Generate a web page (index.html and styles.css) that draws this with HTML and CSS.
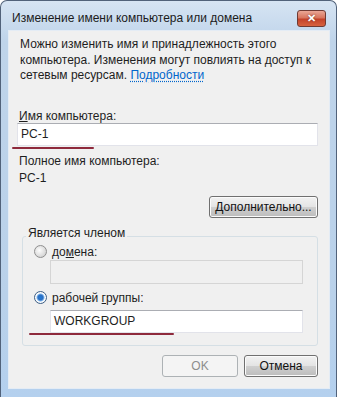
FILE: index.html
```html
<!DOCTYPE html>
<html lang="ru">

<head>
  <meta charset="UTF-8">
  <title>Изменение имени компьютера или домена</title>
  <link rel="stylesheet" href="styles.css">
</head>

<body>
  <div class="window">
    <div class="titlebar">
      <div class="title">Изменение имени компьютера или домена</div>
      <div class="close_btn">&#x2715;</div>
    </div>

    <div class="client">
      <p class="intro">Можно изменить имя и принадлежность этого компьютера. Изменения могут повлиять на доступ к сетевым ресурсам. <a class="more">Подробности</a></p>

      <div class="label name_label"><u>И</u>мя компьютера:</div>
      <div class="textbox">PC-1</div>

      <div class="label full_label">Полное имя компьютера:</div>
      <div class="label">PC-1</div>

      <div class="row_right">
        <div class="btn btn_more"><u>Д</u>ополнительно...</div>
      </div>

      <fieldset class="group">
        <legend>Является членом</legend>
        <div class="radio_row">
          <span class="radio"></span>
          <span>до<u>м</u>ена:</span>
        </div>
        <div class="textbox small disabled"></div>
        <div class="radio_row second">
          <span class="radio checked"></span>
          <span>рабочей <u>г</u>руппы:</span>
        </div>
        <div class="textbox small">WORKGROUP</div>
      </fieldset>

      <div class="buttons">
        <div class="btn btn_ok">OK</div>
        <div class="btn btn_cancel">Отмена</div>
      </div>

      <!-- red marks drawn over the screenshot -->
      <div class="mark mark_name"></div>
      <div class="mark mark_group"></div>
    </div>
  </div>
</body>

</html>
```

FILE: styles.css
```css
body {
  margin: 0;
  font-family: "Liberation Sans", Arial, sans-serif;
  font-size: 12px;
  color: #1e1e1e;
}

.window {
  width: 337px;
  height: 397px;
  box-sizing: border-box;
  border: 1px solid #51627a;
  border-bottom: none;
  border-radius: 7px 7px 0 0;
  background: linear-gradient(#d6e4f3, #bfd4ea 40px, #b9d1ea 300px, #b4d0ee);
  padding: 0 6px 0 7px;
}

.titlebar {
  height: 29px;
  display: flex;
  align-items: flex-start;
  justify-content: space-between;
}

.title {
  padding-top: 10px;
  padding-left: 4px;
  font-size: 12px;
  color: #1b1b1b;
}

.close_btn {
  margin-top: 9px;
  margin-right: 4px;
  width: 27px;
  height: 15px;
  border: 1px solid #6f3a33;
  border-radius: 3px;
  background: linear-gradient(#eaa796, #d8765f 45%, #c3432a 55%, #d7623f);
  color: #fff;
  font-size: 11px;
  font-weight: bold;
  text-align: center;
  line-height: 15px;
  text-shadow: 0 0 2px #6f2a1a;
}

.client {
  height: 359px;
  box-sizing: border-box;
  background: #f0f0f0;
  border: 1px solid #e4ecf5;
  padding: 6px 11px 0 8px;
  position: relative;
}

.intro {
  margin: 0;
  padding-left: 3px;
  line-height: 15.5px;
  width: 300px;
}

.more {
  color: #0066cc;
  text-decoration: underline dotted;
  text-underline-offset: 2px;
}

.label {
  padding-left: 2px;
  line-height: 17px;
}

.name_label {
  margin-top: 25px;
  line-height: 14px;
}

.full_label {
  margin-top: 7px;
}

.textbox {
  height: 23px;
  box-sizing: border-box;
  border: 1px solid #e2e3ea;
  border-top-color: #abadb3;
  background: #fff;
  padding-left: 3px;
  line-height: 21px;
}

.textbox.small {
  margin-left: 16px;
  width: 253px;
}

.textbox.disabled {
  height: 24px;
  background: #f0f0f0;
  border-color: #d5d5d5;
}

.mark {
  position: absolute;
  height: 2px;
  background: #8e2a3c;
  border-radius: 1px;
}

.mark_name {
  left: 3px;
  top: 116px;
  width: 82px;
}

.mark_group {
  left: 20px;
  top: 302px;
  width: 145px;
}

.row_right {
  display: flex;
  justify-content: flex-end;
  margin-top: 9px;
}

.btn {
  height: 22px;
  box-sizing: border-box;
  border: 1px solid #707070;
  border-radius: 3px;
  background: linear-gradient(#f2f2f2, #e4e4e4 48%, #cfcfcf 52%, #bcbcbc);
  box-shadow: inset 0 0 0 1px #fbfbfb;
  text-align: center;
  line-height: 20px;
  color: #111;
}

.btn_more {
  width: 109px;
}

.group {
  margin: 8px 0 0 5px;
  padding: 0 0 12px 11px;
  border: 1px solid #d5dfe5;
  border-radius: 3px;
}

.group legend {
  padding: 0 2px 8px 2px;
  margin-left: -8px;
  line-height: 14px;
}

.radio_row {
  display: flex;
  align-items: center;
  gap: 5px;
  height: 16px;
  margin-top: -4px;
}

.radio_row.second {
  margin-top: 6px;
  margin-bottom: 4px;
}

.radio {
  width: 11px;
  height: 11px;
  border: 1px solid #8f8f8f;
  border-radius: 50%;
  background: radial-gradient(circle at 40% 40%, #fdfdfd, #d7d7d7 70%, #c8c8c8);
}

.radio.checked {
  background: radial-gradient(circle, #1b7ad8 0, #2f6ec0 2.5px, #7fb6ec 3.5px, #fff 4.5px, #e6e6e6);
  border-color: #3c5e85;
}

.buttons {
  display: flex;
  justify-content: flex-end;
  gap: 6px;
  margin-top: 9px;
}

.btn_ok {
  width: 76px;
  border-color: #adb2b5;
  background: #f4f4f4;
  box-shadow: none;
  color: #8d8d8d;
}

.btn_cancel {
  width: 74px;
}
```
